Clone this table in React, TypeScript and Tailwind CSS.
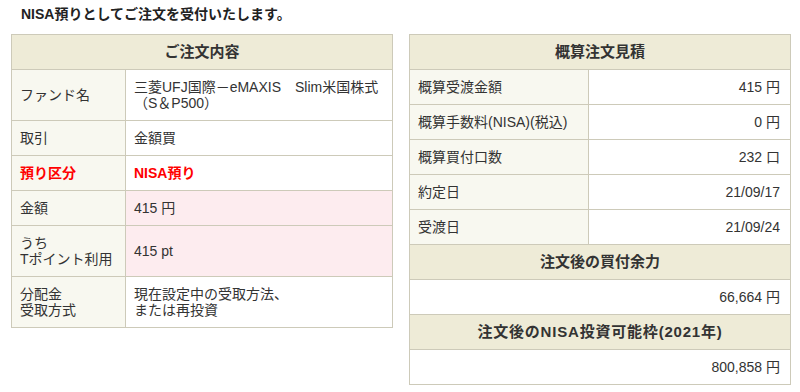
import React from 'react';

const font = "font-['Liberation_Sans','Noto_Sans_CJK_JP',sans-serif]";

const orderRows = [
  { label: 'ファンド名', value: ['三菱UFJ国際－eMAXIS　Slim米国株式', '（S＆P500）'], h: 'h-[51px]' },
  { label: '取引', value: ['金額買'], h: 'h-[35px]' },
  { label: '預り区分', value: ['NISA預り'], h: 'h-[35px]', red: true },
  { label: '金額', value: ['415 円'], h: 'h-[35px]', pink: true },
  { label: ['うち', 'Tポイント利用'], value: ['415 pt'], h: 'h-[51px]', pink: true },
  { label: ['分配金', '受取方式'], value: ['現在設定中の受取方法、', 'または再投資'], h: 'h-[51px]' },
];

const estimateRows = [
  { label: '概算受渡金額', value: '415 円' },
  { label: '概算手数料(NISA)(税込)', value: '0 円' },
  { label: '概算買付口数', value: '232 口' },
  { label: '約定日', value: '21/09/17' },
  { label: '受渡日', value: '21/09/24' },
];

const Lines = ({ lines }: { lines: string | string[] }) => {
  const arr = Array.isArray(lines) ? lines : [lines];
  return (
    <>
      {arr.map((l, i) => (
        <div key={i}>{l}</div>
      ))}
    </>
  );
};

const App = () => {
  return (
    <div className={`w-[800px] h-[392px] bg-white text-[14px] leading-[16px] text-[#333] ${font}`}>
      <div className="pl-[21px] pt-[6px] h-[34px] font-bold text-[14px] text-[#222]">
        NISA預りとしてご注文を受付いたします。
      </div>
      <div className="flex pl-[11px] gap-[16px] items-start">
        {/* left: order details */}
        <table className="w-[382px] table-fixed border-collapse border border-[#cdcab9]">
          <colgroup>
            <col className="w-[114px]" />
            <col />
          </colgroup>
          <tbody>
            <tr>
              <th colSpan={2} className="h-[35px] bg-[#eeebd7] border border-[#cdcab9] text-[15px] font-bold text-[#333]">
                ご注文内容
              </th>
            </tr>
            {orderRows.map((r, i) => (
              <tr key={i}>
                <td className={`${r.h} bg-[#f8f8f0] border border-[#cdcab9] pl-[8px] align-middle ${r.red ? 'text-[#ff0000] font-bold' : ''}`}>
                  <Lines lines={r.label} />
                </td>
                <td className={`${r.h} border border-[#cdcab9] pl-[8px] align-middle ${r.pink ? 'bg-[#fdecef]' : 'bg-white'} ${r.red ? 'text-[#ff0000] font-bold' : ''}`}>
                  <Lines lines={r.value} />
                </td>
              </tr>
            ))}
          </tbody>
        </table>

        {/* right: estimate */}
        <table className="w-[382px] table-fixed border-collapse border border-[#cdcab9]">
          <colgroup>
            <col className="w-[179px]" />
            <col />
          </colgroup>
          <tbody>
            <tr>
              <th colSpan={2} className="h-[35px] bg-[#eeebd7] border border-[#cdcab9] text-[15px] font-bold">
                概算注文見積
              </th>
            </tr>
            {estimateRows.map((r, i) => (
              <tr key={i}>
                <td className="h-[35px] bg-[#f8f8f0] border border-[#cdcab9] pl-[8px]">{r.label}</td>
                <td className="h-[35px] bg-white border border-[#cdcab9] pr-[10px] text-right">{r.value}</td>
              </tr>
            ))}
            <tr>
              <th colSpan={2} className="h-[35px] bg-[#eeebd7] border border-[#cdcab9] text-[15px] font-bold">
                注文後の買付余力
              </th>
            </tr>
            <tr>
              <td colSpan={2} className="h-[35px] bg-white border border-[#cdcab9] pr-[10px] text-right">
                66,664 円
              </td>
            </tr>
            <tr>
              <th colSpan={2} className="h-[35px] bg-[#eeebd7] border border-[#cdcab9] text-[15px] font-bold tracking-[0.8px]">
                注文後のNISA投資可能枠(2021年)
              </th>
            </tr>
            <tr>
              <td colSpan={2} className="h-[35px] bg-white border border-[#cdcab9] pr-[10px] text-right">
                800,858 円
              </td>
            </tr>
          </tbody>
        </table>
      </div>
    </div>
  );
};

export default App;
